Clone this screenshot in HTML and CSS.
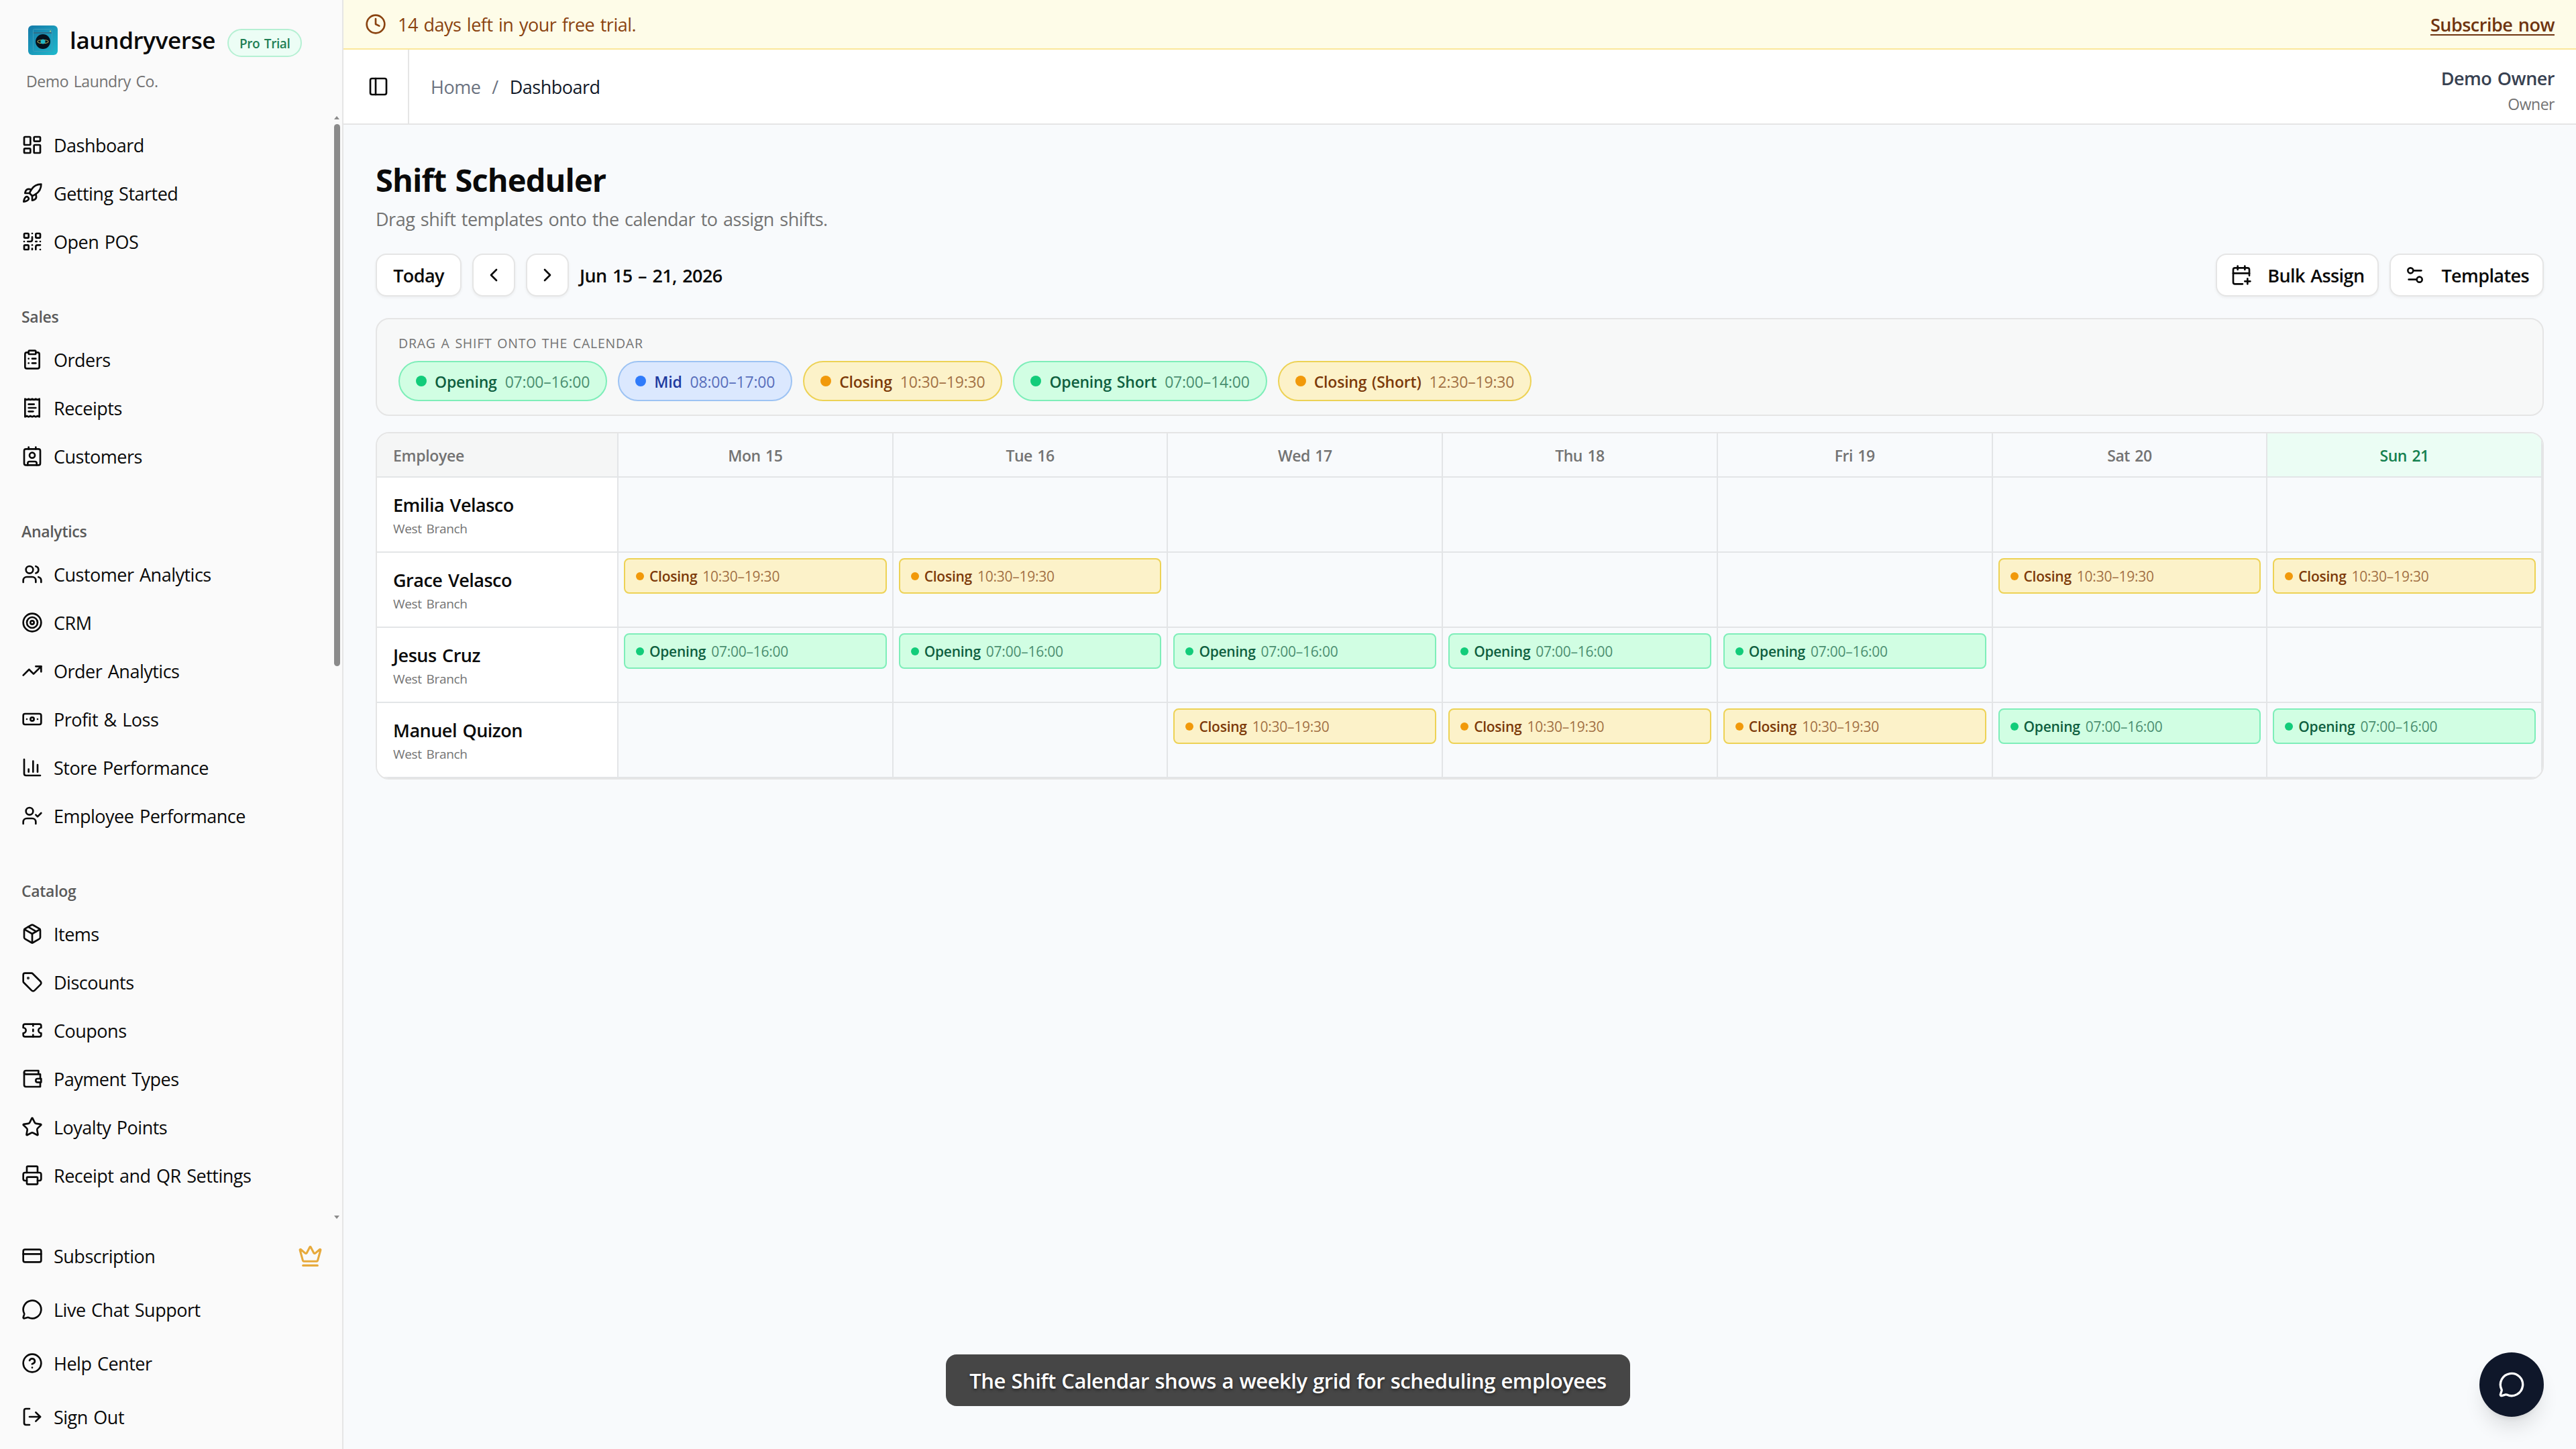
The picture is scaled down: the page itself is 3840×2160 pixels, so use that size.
FILE: index.html
```html
<!DOCTYPE html>
<html lang="en">
<head>
  <meta charset="UTF-8">
  <meta name="viewport" content="width=device-width, initial-scale=1.0">
  <title>Shift Scheduler - laundryverse</title>
  <link rel="stylesheet" href="styles.css">
</head>
<body>
  <div class="app">
    <aside class="sidebar">
      <div class="brand">
        <div class="brand-row">
          <svg class="brand-logo" viewBox="0 0 44 44">
            <defs>
              <linearGradient id="logo-bg" x1="0" y1="0" x2="1" y2="1">
                <stop offset="0" stop-color="#1479a8"/>
                <stop offset="1" stop-color="#1fb9cc"/>
              </linearGradient>
            </defs>
            <rect width="44" height="44" rx="6" fill="url(#logo-bg)"/>
            <rect x="7.500" y="5.500" width="28" height="33" rx="2" fill="none" stroke="#3d9dbb" stroke-width="1"/>
            <path d="M8 11h27" stroke="#2f6f8a" stroke-width="2"/>
            <circle cx="33" cy="8.500" r="1" fill="#d8d27a"/>
            <circle cx="22" cy="24" r="11" fill="#06121d"/>
            <ellipse cx="22" cy="24" rx="8" ry="2.500" fill="none" stroke="#a9a552" stroke-width="1.200"/>
            <circle cx="22" cy="24" r="3.500" fill="#22b8c4"/>
          </svg>
          <span class="brand-name">laundryverse</span>
          <span class="badge">Pro Trial</span>
        </div>
        <div class="brand-org">Demo Laundry Co.</div>
      </div>

      <div class="nav-wrap">
        <nav class="nav">
          <div class="nav-group">
            <a class="nav-item"><svg class="icon" viewBox="0 0 24 24"><rect x="3" y="3" width="7" height="9" rx="1"/><rect x="14" y="3" width="7" height="5" rx="1"/><rect x="14" y="12" width="7" height="9" rx="1"/><rect x="3" y="16" width="7" height="5" rx="1"/></svg><span>Dashboard</span></a>
            <a class="nav-item"><svg class="icon" viewBox="0 0 24 24"><path d="M4.500 16.500c-1.500 1.260-2 5-2 5s3.740-.5 5-2c.71-.84.7-2.130-.09-2.910a2.180 2.180 0 0 0-2.910-.09z"/><path d="m12 15-3-3a22 22 0 0 1 2-3.950A12.880 12.880 0 0 1 22 2c0 2.720-.78 7.500-6 11a22.350 22.350 0 0 1-4 2z"/><path d="M9 12H4s.55-3.030 2-4c1.620-1.080 5 0 5 0"/><path d="M12 15v5s3.030-.55 4-2c1.080-1.620 0-5 0-5"/></svg><span>Getting Started</span></a>
            <a class="nav-item"><svg class="icon" viewBox="0 0 24 24"><rect x="3" y="3" width="5" height="5" rx="1"/><rect x="16" y="3" width="5" height="5" rx="1"/><rect x="3" y="16" width="5" height="5" rx="1"/><path d="M21 16h-3a2 2 0 0 0-2 2v3"/><path d="M21 21v.01"/><path d="M12 7v3a2 2 0 0 1-2 2H7"/><path d="M3 12h.01"/><path d="M12 3h.01"/><path d="M12 16v.01"/><path d="M16 12h1"/><path d="M21 12v.01"/><path d="M12 21v-1"/></svg><span>Open POS</span></a>
          </div>

          <div class="nav-group">
            <div class="nav-label">Sales</div>
            <a class="nav-item"><svg class="icon" viewBox="0 0 24 24"><rect x="8" y="2" width="8" height="4" rx="1"/><path d="M16 4h2a2 2 0 0 1 2 2v14a2 2 0 0 1-2 2H6a2 2 0 0 1-2-2V6a2 2 0 0 1 2-2h2"/><path d="M12 11h4"/><path d="M12 16h4"/><path d="M8 11h.01"/><path d="M8 16h.01"/></svg><span>Orders</span></a>
            <a class="nav-item"><svg class="icon" viewBox="0 0 24 24"><path d="M4 2v20l2-1 2 1 2-1 2 1 2-1 2 1 2-1 2 1V2l-2 1-2-1-2 1-2-1-2 1-2-1-2 1Z"/><path d="M14 8H8"/><path d="M16 12H8"/><path d="M13 16H8"/></svg><span>Receipts</span></a>
            <a class="nav-item"><svg class="icon" viewBox="0 0 24 24"><path d="M16 2v2"/><path d="M7 22v-2a2 2 0 0 1 2-2h6a2 2 0 0 1 2 2v2"/><path d="M8 2v2"/><circle cx="12" cy="11" r="3"/><rect x="3" y="4" width="18" height="18" rx="2"/></svg><span>Customers</span></a>
          </div>

          <div class="nav-group">
            <div class="nav-label">Analytics</div>
            <a class="nav-item"><svg class="icon" viewBox="0 0 24 24"><path d="M16 21v-2a4 4 0 0 0-4-4H6a4 4 0 0 0-4 4v2"/><circle cx="9" cy="7" r="4"/><path d="M22 21v-2a4 4 0 0 0-3-3.870"/><path d="M16 3.130a4 4 0 0 1 0 7.750"/></svg><span>Customer Analytics</span></a>
            <a class="nav-item"><svg class="icon" viewBox="0 0 24 24"><circle cx="12" cy="12" r="10"/><circle cx="12" cy="12" r="6"/><circle cx="12" cy="12" r="2"/></svg><span>CRM</span></a>
            <a class="nav-item"><svg class="icon" viewBox="0 0 24 24"><path d="M16 7h6v6"/><path d="m22 7-8.500 8.500-5-5L2 17"/></svg><span>Order Analytics</span></a>
            <a class="nav-item"><svg class="icon" viewBox="0 0 24 24"><rect x="2" y="6" width="20" height="12" rx="2"/><circle cx="12" cy="12" r="2"/><path d="M6 12h.01M18 12h.01"/></svg><span>Profit &amp; Loss</span></a>
            <a class="nav-item"><svg class="icon" viewBox="0 0 24 24"><path d="M3 3v16a2 2 0 0 0 2 2h16"/><path d="M18 17V9"/><path d="M13 17V5"/><path d="M8 17v-3"/></svg><span>Store Performance</span></a>
            <a class="nav-item"><svg class="icon" viewBox="0 0 24 24"><path d="m16 11 2 2 4-4"/><path d="M16 21v-2a4 4 0 0 0-4-4H6a4 4 0 0 0-4 4v2"/><circle cx="9" cy="7" r="4"/></svg><span>Employee Performance</span></a>
          </div>

          <div class="nav-group">
            <div class="nav-label">Catalog</div>
            <a class="nav-item"><svg class="icon" viewBox="0 0 24 24"><path d="M11 21.730a2 2 0 0 0 2 0l7-4A2 2 0 0 0 21 16V8a2 2 0 0 0-1-1.730l-7-4a2 2 0 0 0-2 0l-7 4A2 2 0 0 0 3 8v8a2 2 0 0 0 1 1.730z"/><path d="M12 22V12"/><path d="M3.290 7 12 12l8.710-5"/><path d="m7.500 4.270 9 5.150"/></svg><span>Items</span></a>
            <a class="nav-item"><svg class="icon" viewBox="0 0 24 24"><path d="M12.586 2.586A2 2 0 0 0 11.172 2H4a2 2 0 0 0-2 2v7.172a2 2 0 0 0 .586 1.414l8.704 8.704a2.426 2.426 0 0 0 3.420 0l6.580-6.580a2.426 2.426 0 0 0 0-3.420z"/><circle cx="7.500" cy="7.500" r=".5" fill="currentColor"/></svg><span>Discounts</span></a>
            <a class="nav-item"><svg class="icon" viewBox="0 0 24 24"><path d="M2 9a3 3 0 0 1 0 6v2a2 2 0 0 0 2 2h16a2 2 0 0 0 2-2v-2a3 3 0 0 1 0-6V7a2 2 0 0 0-2-2H4a2 2 0 0 0-2 2Z"/><path d="M13 5v2"/><path d="M13 17v2"/><path d="M13 11v2"/></svg><span>Coupons</span></a>
            <a class="nav-item"><svg class="icon" viewBox="0 0 24 24"><path d="M21 12V7H5a2 2 0 0 1 0-4h14v4"/><path d="M3 5v14a2 2 0 0 0 2 2h16v-5"/><path d="M18 12a2 2 0 0 0 0 4h4v-4Z"/></svg><span>Payment Types</span></a>
            <a class="nav-item"><svg class="icon" viewBox="0 0 24 24"><path d="M11.525 2.295a.53.53 0 0 1 .95 0l2.310 4.679a2.123 2.123 0 0 0 1.595 1.160l5.166.756a.53.53 0 0 1 .294.904l-3.736 3.638a2.123 2.123 0 0 0-.611 1.878l.882 5.140a.53.53 0 0 1-.771.56l-4.618-2.428a2.122 2.122 0 0 0-1.973 0L6.396 21.010a.53.53 0 0 1-.77-.56l.881-5.139a2.122 2.122 0 0 0-.611-1.879L2.160 9.795a.53.53 0 0 1 .294-.906l5.165-.755a2.122 2.122 0 0 0 1.597-1.160z"/></svg><span>Loyalty Points</span></a>
            <a class="nav-item"><svg class="icon" viewBox="0 0 24 24"><path d="M6 18H4a2 2 0 0 1-2-2v-5a2 2 0 0 1 2-2h16a2 2 0 0 1 2 2v5a2 2 0 0 1-2 2h-2"/><path d="M6 9V3a1 1 0 0 1 1-1h10a1 1 0 0 1 1 1v6"/><rect x="6" y="14" width="12" height="8" rx="1"/></svg><span>Receipt and QR Settings</span></a>
          </div>
        </nav>
        <div class="scrollbar">
          <span class="scroll-arrow up"></span>
          <span class="scroll-thumb"></span>
          <span class="scroll-arrow down"></span>
        </div>
      </div>

      <div class="sidebar-footer">
        <a class="nav-item"><svg class="icon" viewBox="0 0 24 24"><rect x="2" y="5" width="20" height="14" rx="2"/><path d="M2 10h20"/></svg><span>Subscription</span><svg class="icon icon-crown" viewBox="0 0 24 24"><path d="M11.562 3.266a.5.5 0 0 1 .876 0L15.390 8.870a1 1 0 0 0 1.516.294L21.183 5.500a.5.5 0 0 1 .798.519l-2.834 10.246a1 1 0 0 1-.956.734H5.810a1 1 0 0 1-.957-.734L2.020 6.020a.5.5 0 0 1 .798-.519l4.276 3.664a1 1 0 0 0 1.516-.294z"/><path d="M5 21h14"/></svg></a>
        <a class="nav-item"><svg class="icon" viewBox="0 0 24 24"><path d="M2.992 16.342a2 2 0 0 1 .094 1.167l-1.065 3.290a1 1 0 0 0 1.236 1.168l3.413-.998a2 2 0 0 1 1.099.092 10 10 0 1 0-4.777-4.719"/></svg><span>Live Chat Support</span></a>
        <a class="nav-item"><svg class="icon" viewBox="0 0 24 24"><circle cx="12" cy="12" r="10"/><path d="M9.090 9a3 3 0 0 1 5.830 1c0 2-3 3-3 3"/><path d="M12 17h.01"/></svg><span>Help Center</span></a>
        <a class="nav-item"><svg class="icon" viewBox="0 0 24 24"><path d="M9 21H5a2 2 0 0 1-2-2V5a2 2 0 0 1 2-2h4"/><path d="m16 17 5-5-5-5"/><path d="M21 12H9"/></svg><span>Sign Out</span></a>
      </div>
    </aside>

    <div class="page">
      <div class="trial-banner">
        <svg class="icon" viewBox="0 0 24 24"><circle cx="12" cy="12" r="10"/><path d="M12 6v6l4 2"/></svg>
        <span>14 days left in your free trial.</span>
        <a class="subscribe">Subscribe now</a>
      </div>

      <header class="topbar">
        <button class="sidebar-toggle"><svg class="icon" viewBox="0 0 24 24"><rect x="3" y="3" width="18" height="18" rx="2"/><path d="M9 3v18"/></svg></button>
        <div class="breadcrumb">
          <span>Home</span>
          <span>/</span>
          <span class="current">Dashboard</span>
        </div>
        <div class="user">
          <div class="user-name">Demo Owner</div>
          <div class="user-role">Owner</div>
        </div>
      </header>

      <main class="content">
        <h1>Shift Scheduler</h1>
        <p class="subtitle">Drag shift templates onto the calendar to assign shifts.</p>

        <div class="toolbar">
          <button class="btn btn-today">Today</button>
          <button class="btn btn-icon"><svg class="icon" viewBox="0 0 24 24"><path d="m15 18-6-6 6-6"/></svg></button>
          <button class="btn btn-icon"><svg class="icon" viewBox="0 0 24 24"><path d="m9 18 6-6-6-6"/></svg></button>
          <span class="range">Jun 15 – 21, 2026</span>
          <div class="toolbar-right">
            <button class="btn btn-action"><svg class="icon" viewBox="0 0 24 24"><path d="M16 19h6"/><path d="M16 2v4"/><path d="M19 16v6"/><path d="M21 12.598V6a2 2 0 0 0-2-2H5a2 2 0 0 0-2 2v14a2 2 0 0 0 2 2h8.500"/><path d="M3 10h18"/><path d="M8 2v4"/></svg><span>Bulk Assign</span></button>
            <button class="btn btn-action"><svg class="icon" viewBox="0 0 24 24"><path d="M14 17H5"/><path d="M19 7h-9"/><circle cx="17" cy="17" r="3"/><circle cx="7" cy="7" r="3"/></svg><span>Templates</span></button>
          </div>
        </div>

        <section class="palette">
          <div class="palette-title">Drag a shift onto the calendar</div>
          <div class="palette-items">
            <div class="pill green"><i class="dot"></i><b>Opening</b><span class="time">07:00–16:00</span></div>
            <div class="pill blue"><i class="dot"></i><b>Mid</b><span class="time">08:00–17:00</span></div>
            <div class="pill yellow"><i class="dot"></i><b>Closing</b><span class="time">10:30–19:30</span></div>
            <div class="pill green"><i class="dot"></i><b>Opening Short</b><span class="time">07:00–14:00</span></div>
            <div class="pill yellow"><i class="dot"></i><b>Closing (Short)</b><span class="time">12:30–19:30</span></div>
          </div>
        </section>

        <section class="calendar">
          <div class="head head-employee">Employee</div>
          <div class="head">Mon 15</div>
          <div class="head">Tue 16</div>
          <div class="head">Wed 17</div>
          <div class="head">Thu 18</div>
          <div class="head">Fri 19</div>
          <div class="head">Sat 20</div>
          <div class="head today">Sun 21</div>

          <div class="employee"><div class="employee-name">Emilia Velasco</div><div class="employee-branch">West Branch</div></div>
          <div class="cell"></div>
          <div class="cell"></div>
          <div class="cell"></div>
          <div class="cell"></div>
          <div class="cell"></div>
          <div class="cell"></div>
          <div class="cell"></div>

          <div class="employee"><div class="employee-name">Grace Velasco</div><div class="employee-branch">West Branch</div></div>
          <div class="cell"><div class="shift yellow"><i class="dot"></i><b>Closing</b><span class="time">10:30–19:30</span></div></div>
          <div class="cell"><div class="shift yellow"><i class="dot"></i><b>Closing</b><span class="time">10:30–19:30</span></div></div>
          <div class="cell"></div>
          <div class="cell"></div>
          <div class="cell"></div>
          <div class="cell"><div class="shift yellow"><i class="dot"></i><b>Closing</b><span class="time">10:30–19:30</span></div></div>
          <div class="cell"><div class="shift yellow"><i class="dot"></i><b>Closing</b><span class="time">10:30–19:30</span></div></div>

          <div class="employee"><div class="employee-name">Jesus Cruz</div><div class="employee-branch">West Branch</div></div>
          <div class="cell"><div class="shift green"><i class="dot"></i><b>Opening</b><span class="time">07:00–16:00</span></div></div>
          <div class="cell"><div class="shift green"><i class="dot"></i><b>Opening</b><span class="time">07:00–16:00</span></div></div>
          <div class="cell"><div class="shift green"><i class="dot"></i><b>Opening</b><span class="time">07:00–16:00</span></div></div>
          <div class="cell"><div class="shift green"><i class="dot"></i><b>Opening</b><span class="time">07:00–16:00</span></div></div>
          <div class="cell"><div class="shift green"><i class="dot"></i><b>Opening</b><span class="time">07:00–16:00</span></div></div>
          <div class="cell"></div>
          <div class="cell"></div>

          <div class="employee"><div class="employee-name">Manuel Quizon</div><div class="employee-branch">West Branch</div></div>
          <div class="cell"></div>
          <div class="cell"></div>
          <div class="cell"><div class="shift yellow"><i class="dot"></i><b>Closing</b><span class="time">10:30–19:30</span></div></div>
          <div class="cell"><div class="shift yellow"><i class="dot"></i><b>Closing</b><span class="time">10:30–19:30</span></div></div>
          <div class="cell"><div class="shift yellow"><i class="dot"></i><b>Closing</b><span class="time">10:30–19:30</span></div></div>
          <div class="cell"><div class="shift green"><i class="dot"></i><b>Opening</b><span class="time">07:00–16:00</span></div></div>
          <div class="cell"><div class="shift green"><i class="dot"></i><b>Opening</b><span class="time">07:00–16:00</span></div></div>
        </section>
      </main>
    </div>
  </div>

  <div class="caption">The Shift Calendar shows a weekly grid for scheduling employees</div>
  <button class="chat-button"><svg class="icon" viewBox="0 0 24 24"><path d="M2.992 16.342a2 2 0 0 1 .094 1.167l-1.065 3.290a1 1 0 0 0 1.236 1.168l3.413-.998a2 2 0 0 1 1.099.092 10 10 0 1 0-4.777-4.719"/></svg></button>
</body>
</html>
```
FILE: styles.css
```css
* {
  box-sizing: border-box;
}

body {
  margin: 0;
  font-family: "Open Sans", "Noto Sans", sans-serif;
  font-size: 27px;
  letter-spacing: -0.5px;
  word-spacing: 2px;
  color: #0a0a0a;
  background-color: #f8fafc;
  overflow: hidden;
}

button {
  font: inherit;
  letter-spacing: inherit;
  word-spacing: inherit;
  color: inherit;
  margin: 0;
  padding: 0;
  border: none;
  background: none;
}

.app {
  display: flex;
  height: 100vh;
}

.icon {
  width: 32px;
  height: 32px;
  flex: none;
  fill: none;
  stroke: currentColor;
  stroke-width: 2;
  stroke-linecap: round;
  stroke-linejoin: round;
}

/* sidebar */
.sidebar {
  width: 512px;
  flex: none;
  display: flex;
  flex-direction: column;
  background-color: #fafafa;
  border-right: 2px solid #e5e5e5;
}

.brand {
  height: 168px;
  padding: 36px 0 0 42px;
}

.brand-row {
  display: flex;
  align-items: center;
  height: 48px;
}

.brand-logo {
  width: 44px;
  height: 44px;
}

.brand-name {
  margin-left: 18px;
  width: 220px;
  font-size: 35px;
  font-weight: 600;
  line-height: 46px;
  letter-spacing: -0.35px;
}

.badge {
  margin: 8px 0 0 15px;
  height: 42px;
  padding: 0 16px;
  border: 2px solid #b5f0d3;
  border-radius: 21px;
  background-color: #ecfdf5;
  color: #1f7f55;
  font-size: 19px;
  font-weight: 600;
  line-height: 40px;
  letter-spacing: -0.4px;
  white-space: nowrap;
}

.brand-org {
  margin: 20px 0 0 -3px;
  font-size: 23px;
  line-height: 35px;
  letter-spacing: -0.4px;
  color: #737373;
}

.nav-wrap {
  flex: 1;
  min-height: 0;
  display: flex;
}

.nav {
  flex: 1;
  display: flex;
  flex-direction: column;
  gap: 16px;
  overflow: hidden;
}

.nav-group {
  display: flex;
  flex-direction: column;
  padding: 16px;
}

.nav-item {
  display: flex;
  align-items: center;
  gap: 16px;
  height: 64px;
  padding: 0 16px;
  white-space: nowrap;
}

.nav-group .nav-item + .nav-item {
  margin-top: 8px;
}

.nav-label {
  height: 64px;
  padding: 0 16px;
  font-size: 23px;
  font-weight: 600;
  line-height: 64px;
  letter-spacing: -0.3px;
  color: #5a5a5a;
}

.scrollbar {
  width: 12px;
  display: flex;
  flex-direction: column;
  align-items: flex-start;
}

.scroll-arrow {
  border: 4.5px solid transparent;
}

.scroll-arrow.up {
  margin-top: 1px;
  border-bottom: 5px solid #8b8b8b;
}

.scroll-arrow.down {
  margin: auto 0 3px;
  border-top: 5px solid #8b8b8b;
}

.scroll-thumb {
  width: 9px;
  height: 808px;
  margin-top: 7px;
  border-radius: 5px;
  background-color: #8b8b8b;
}

.sidebar-footer {
  display: flex;
  flex-direction: column;
  gap: 16px;
  padding: 16px;
}

.icon-crown {
  width: 37px;
  height: 37px;
  margin: 0 -3px 0 auto;
  color: #e7aa3c;
}

/* top area */
.page {
  flex: 1;
  min-width: 0;
}

.trial-banner {
  display: flex;
  align-items: center;
  gap: 17px;
  height: 74px;
  padding: 0 32px;
  border-bottom: 2px solid #fbe79a;
  background-color: #fefce8;
  color: #8a4310;
}

.trial-banner .subscribe {
  margin-left: auto;
  color: #6e3410;
  font-weight: 600;
  text-decoration: underline;
  text-decoration-thickness: 2px;
  text-underline-offset: 4px;
}

.topbar {
  display: flex;
  align-items: center;
  height: 112px;
  padding-right: 32px;
  border-bottom: 2px solid #e5e5e5;
  background-color: #fff;
}

.sidebar-toggle {
  width: 98px;
  height: 100%;
  padding-left: 8px;
  border-right: 2px solid #e5e5e5;
}

.sidebar-toggle .icon {
  display: block;
  margin: 0 auto;
}

.breadcrumb {
  display: flex;
  gap: 17px;
  margin-left: 32px;
  padding-top: 1px;
  color: #6b7280;
}

.breadcrumb .current {
  color: #111827;
}

.user {
  margin-left: auto;
  padding-top: 9px;
  text-align: right;
}

.user-name {
  font-weight: 600;
  line-height: 42px;
  color: #374151;
}

.user-role {
  font-size: 23px;
  line-height: 34px;
  color: #737373;
}

/* scheduler */
.content {
  padding: 46px 48px;
}

h1 {
  margin: 0;
  font-size: 47px;
  font-weight: 700;
  line-height: 72px;
  letter-spacing: -0.9px;
}

.subtitle {
  margin: 2px 0 0;
  line-height: 42px;
  color: #737373;
}

.toolbar {
  display: flex;
  align-items: center;
  gap: 16px;
  margin-top: 30px;
  font-weight: 600;
  letter-spacing: -0.6px;
}

.btn {
  display: flex;
  align-items: center;
  justify-content: center;
  height: 64px;
  border: 2px solid #e5e5e5;
  border-radius: 16px;
  background-color: #fff;
  box-shadow: 0 2px 4px rgba(0, 0, 0, 0.05);
}

.btn-today {
  width: 128px;
}

.btn-icon {
  width: 64px;
}

.btn-action {
  gap: 23px;
  padding: 0 20px;
}

.toolbar-right {
  display: flex;
  gap: 16px;
  margin-left: auto;
}

.palette {
  height: 146px;
  margin-top: 32px;
  padding: 20px 32px;
  border: 2px solid #e5e5e5;
  border-radius: 20px;
  background-color: #f7f8f8;
}

.palette-title {
  padding-top: 1px;
  font-size: 19.500px;
  line-height: 30px;
  letter-spacing: 0.75px;
  text-transform: uppercase;
  color: #737373;
}

.palette-items {
  display: flex;
  gap: 16px;
  margin-top: 11px;
}

.pill {
  display: flex;
  align-items: center;
  gap: 12px;
  height: 60px;
  padding: 0 24px;
  border-width: 2px;
  border-style: solid;
  border-radius: 30px;
  font-size: 23px;
  letter-spacing: -0.2px;
}

.pill b,
.pill .time {
  padding-top: 2px;
}

.pill b,
.shift b {
  font-weight: 600;
}

.time {
  opacity: 0.7;
}

.dot {
  width: 16px;
  height: 16px;
  border-radius: 50%;
}

.green {
  border-color: #7eeeb9;
  background-color: #d1fee3;
  color: #0f5f40;
}

.green .dot {
  background-color: #12cc7a;
}

.blue {
  border-color: #9dc3f3;
  background-color: #dbe8fe;
  color: #1e3a9f;
}

.blue .dot {
  background-color: #2f7bfa;
}

.yellow {
  border-color: #edd255;
  background-color: #fcf2c9;
  color: #7c3a0a;
}

.yellow .dot {
  background-color: #f1990a;
}

.calendar {
  display: grid;
  grid-template-columns: 360px repeat(7, 1fr);
  grid-template-rows: 66px repeat(4, 112px);
  margin-top: 24px;
  border: 2px solid #e5e5e5;
  border-radius: 20px;
  overflow: hidden;
}

.head,
.employee,
.cell {
  border-right: 2px solid #e3e5e7;
  border-bottom: 2px solid #e3e5e7;
}

.head {
  padding-top: 1px;
  font-size: 23px;
  font-weight: 600;
  line-height: 64px;
  text-align: center;
  color: #737373;
}

.head-employee {
  padding-left: 24px;
  text-align: left;
  letter-spacing: -0.3px;
  background-color: #f5f6f6;
}

.head.today {
  background-color: #ebfdf4;
  color: #15804f;
}

.employee {
  display: flex;
  flex-direction: column;
  justify-content: center;
  padding-left: 24px;
  background-color: #fff;
}

.employee-name {
  font-weight: 600;
  line-height: 42px;
  letter-spacing: -0.5px;
}

.employee-branch {
  font-size: 19px;
  line-height: 28px;
  letter-spacing: -0.3px;
  color: #737373;
}

.cell {
  min-width: 0;
  padding: 8px;
}

.shift {
  display: flex;
  align-items: center;
  gap: 8px;
  height: 53px;
  padding: 0 16px;
  border-width: 2px;
  border-style: solid;
  border-radius: 8px;
  font-size: 21px;
  letter-spacing: -0.25px;
}

.shift .dot {
  width: 12px;
  height: 12px;
}

/* overlays */
.caption {
  position: fixed;
  left: 50%;
  bottom: 64px;
  width: 1020px;
  height: 77px;
  transform: translateX(-50%);
  border-radius: 16px;
  background-color: #464646;
  color: #fff;
  font-size: 31px;
  font-weight: 600;
  line-height: 78px;
  word-spacing: 1px;
  text-align: center;
  white-space: nowrap;
  text-shadow: 0 2px 4px rgba(0, 0, 0, 0.5);
}

.chat-button {
  position: fixed;
  right: 48px;
  bottom: 48px;
  display: flex;
  align-items: center;
  justify-content: center;
  width: 96px;
  height: 96px;
  border-radius: 50%;
  background-color: #0f172a;
  color: #fff;
  box-shadow: 0 20px 30px -6px rgba(0, 0, 0, 0.12), 0 8px 12px -8px rgba(0, 0, 0, 0.12);
}

.chat-button .icon {
  width: 40px;
  height: 40px;
}
```
